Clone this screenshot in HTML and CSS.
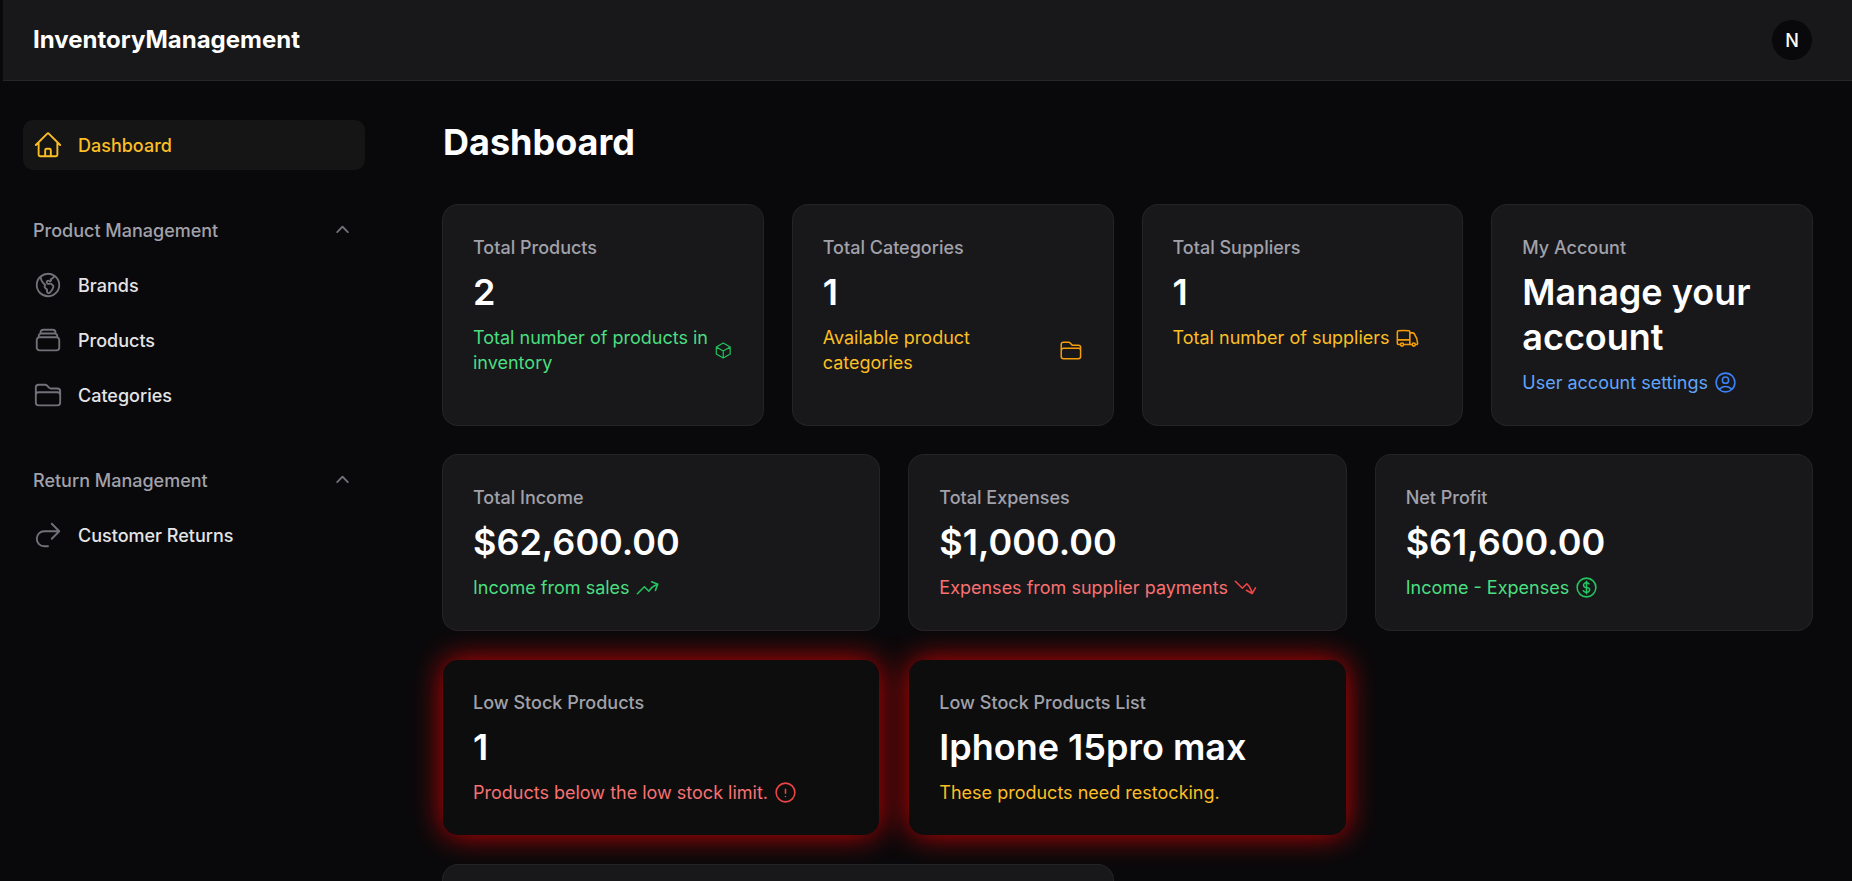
FILE: index.html
```html
<!DOCTYPE html>
<html lang="en">
<head>
<meta charset="utf-8">
<meta name="viewport" content="width=device-width, initial-scale=1">
<title>Dashboard - InventoryManagement</title>
<link rel="stylesheet" href="styles.css">
</head>
<body class="app">
<header class="topbar">
  <a class="brand" href="#">InventoryManagement</a>
  <button class="avatar" type="button" aria-label="User menu">N</button>
</header>
<div class="layout">
  <nav class="sidebar" aria-label="Main">
    <a class="nav-item nav-item-active" href="#" aria-current="page">
      <svg class="icon nav-icon" viewBox="0 0 24 24"><path d="m2.25 12 8.954-8.955c.44-.439 1.152-.439 1.591 0L21.75 12M4.5 9.75v10.125c0 .621.504 1.125 1.125 1.125H9.75v-4.875c0-.621.504-1.125 1.125-1.125h2.25c.621 0 1.125.504 1.125 1.125V21h4.125c.621 0 1.125-.504 1.125-1.125V9.75M8.25 21h8.25"/></svg>
      <span>Dashboard</span>
    </a>
    <section class="nav-group">
      <button class="nav-heading" type="button" aria-expanded="true">
        <span>Product Management</span>
        <svg class="chevron" viewBox="0 0 20 20"><path d="M9.47 6.47a.75.75 0 0 1 1.06 0l4.25 4.25a.75.75 0 1 1-1.06 1.06L10 8.06l-3.72 3.72a.75.75 0 0 1-1.06-1.06l4.25-4.25Z"/></svg>
      </button>
      <a class="nav-item" href="#">
        <svg class="icon nav-icon" viewBox="0 0 24 24"><path d="m6.115 5.19.319 1.913A6 6 0 0 0 8.11 10.36L9.75 12l-.387.775c-.217.433-.132.956.21 1.298l1.348 1.348c.21.21.329.497.329.795v1.089c0 .426.24.815.622 1.006l.153.076c.433.217.956.132 1.298-.21l.723-.723a8.7 8.7 0 0 0 2.288-4.042 1.087 1.087 0 0 0-.358-1.099l-1.33-1.108c-.251-.21-.582-.299-.905-.245l-1.17.195a1.125 1.125 0 0 1-.98-.314l-.295-.295a1.125 1.125 0 0 1 0-1.591l.13-.132a1.125 1.125 0 0 1 1.3-.21l.603.302a.809.809 0 0 0 1.086-1.086L14.25 7.5l1.256-.837a4.5 4.5 0 0 0 1.528-1.732l.146-.292M6.115 5.19A9 9 0 1 0 17.18 4.64M6.115 5.19A8.965 8.965 0 0 1 12 3c1.929 0 3.716.607 5.18 1.64"/></svg>
        <span>Brands</span>
      </a>
      <a class="nav-item" href="#">
        <svg class="icon nav-icon" viewBox="0 0 24 24"><path d="M6 6.878V6a2.25 2.25 0 0 1 2.25-2.25h7.5A2.25 2.25 0 0 1 18 6v.878m-12 0c.235-.083.487-.128.75-.128h10.5c.263 0 .515.045.75.128m-12 0A2.25 2.25 0 0 0 4.5 9v.878m13.5-3A2.25 2.25 0 0 1 19.5 9v.878m0 0a2.246 2.246 0 0 0-.75-.128H5.25c-.263 0-.515.045-.75.128m15 0A2.25 2.25 0 0 1 21 12v6a2.25 2.25 0 0 1-2.25 2.25H5.25A2.25 2.25 0 0 1 3 18v-6c0-.98.626-1.813 1.5-2.122"/></svg>
        <span>Products</span>
      </a>
      <a class="nav-item" href="#">
        <svg class="icon nav-icon" viewBox="0 0 24 24"><path d="M2.25 12.75V12A2.25 2.25 0 0 1 4.5 9.75h15A2.25 2.25 0 0 1 21.75 12v.75m-8.69-6.44-2.12-2.12a1.5 1.5 0 0 0-1.061-.44H4.5A2.25 2.25 0 0 0 2.25 6v12a2.25 2.25 0 0 0 2.25 2.25h15A2.25 2.25 0 0 0 21.75 18V9a2.25 2.25 0 0 0-2.25-2.25h-5.379a1.5 1.5 0 0 1-1.06-.44Z"/></svg>
        <span>Categories</span>
      </a>
    </section>
    <section class="nav-group">
      <button class="nav-heading" type="button" aria-expanded="true">
        <span>Return Management</span>
        <svg class="chevron" viewBox="0 0 20 20"><path d="M9.47 6.47a.75.75 0 0 1 1.06 0l4.25 4.25a.75.75 0 1 1-1.06 1.06L10 8.06l-3.72 3.72a.75.75 0 0 1-1.06-1.06l4.25-4.25Z"/></svg>
      </button>
      <a class="nav-item" href="#">
        <svg class="icon nav-icon" viewBox="0 0 24 24"><path d="m15 15 6-6m0 0-6-6m6 6H9a6 6 0 0 0 0 12h3"/></svg>
        <span>Customer Returns</span>
      </a>
    </section>
  </nav>
  <main class="content">
    <h1 class="page-title">Dashboard</h1>
    <div class="widgets">
      <section class="stats stats-four">
        <article class="card">
          <p class="card-label">Total Products</p>
          <p class="card-value">2</p>
          <p class="card-note note-green"><span>Total number of products in inventory</span>
            <svg class="icon note-icon" viewBox="0 0 24 24"><path d="m21 7.5-9-5.25L3 7.5m18 0-9 5.25m9-5.25v9l-9 5.25M3 7.5l9 5.25M3 7.5v9l9 5.25m0-9v9"/></svg></p>
        </article>
        <article class="card">
          <p class="card-label">Total Categories</p>
          <p class="card-value">1</p>
          <p class="card-note note-amber"><span>Available product categories</span>
            <svg class="icon note-icon" viewBox="0 0 24 24"><path d="M2.25 12.75V12A2.25 2.25 0 0 1 4.5 9.75h15A2.25 2.25 0 0 1 21.75 12v.75m-8.69-6.44-2.12-2.12a1.5 1.5 0 0 0-1.061-.44H4.5A2.25 2.25 0 0 0 2.25 6v12a2.25 2.25 0 0 0 2.25 2.25h15A2.25 2.25 0 0 0 21.75 18V9a2.25 2.25 0 0 0-2.25-2.25h-5.379a1.5 1.5 0 0 1-1.06-.44Z"/></svg></p>
        </article>
        <article class="card">
          <p class="card-label">Total Suppliers</p>
          <p class="card-value">1</p>
          <p class="card-note note-amber"><span>Total number of suppliers</span>
            <svg class="icon note-icon" viewBox="0 0 24 24"><path d="M8.25 18.75a1.5 1.5 0 0 1-3 0m3 0a1.5 1.5 0 0 0-3 0m3 0h6m-9 0H3.375a1.125 1.125 0 0 1-1.125-1.125V14.25m17.25 4.5a1.5 1.5 0 0 1-3 0m3 0a1.5 1.5 0 0 0-3 0m3 0h1.125c.621 0 1.129-.504 1.09-1.124a17.902 17.902 0 0 0-3.213-9.193 2.056 2.056 0 0 0-1.58-.86H14.25M16.5 18.75h-2.25m0-11.177v-.958c0-.568-.422-1.048-.987-1.106a48.554 48.554 0 0 0-10.026 0 1.106 1.106 0 0 0-.987 1.106v7.635m12-6.677v6.677m0 4.5v-4.5m0 0h-12"/></svg></p>
        </article>
        <article class="card">
          <p class="card-label">My Account</p>
          <p class="card-value">Manage your account</p>
          <p class="card-note note-blue"><span>User account settings</span>
            <svg class="icon note-icon" viewBox="0 0 24 24"><path d="M17.982 18.725A7.488 7.488 0 0 0 12 15.75a7.488 7.488 0 0 0-5.982 2.975m11.963 0a9 9 0 1 0-11.963 0m11.963 0A8.966 8.966 0 0 1 12 21a8.966 8.966 0 0 1-5.982-2.275M15 9.75a3 3 0 1 1-6 0 3 3 0 0 1 6 0Z"/></svg></p>
        </article>
      </section>
      <section class="stats stats-three">
        <article class="card">
          <p class="card-label">Total Income</p>
          <p class="card-value">$62,600.00</p>
          <p class="card-note note-green"><span>Income from sales</span>
            <svg class="icon note-icon" viewBox="0 0 24 24"><path d="M2.25 18 9 11.25l4.306 4.306a11.95 11.95 0 0 1 5.814-5.518l2.74-1.22m0 0-5.94-2.281m5.94 2.28-2.28 5.941"/></svg></p>
        </article>
        <article class="card">
          <p class="card-label">Total Expenses</p>
          <p class="card-value">$1,000.00</p>
          <p class="card-note note-red"><span>Expenses from supplier payments</span>
            <svg class="icon note-icon" viewBox="0 0 24 24"><path d="M2.25 6 9 12.75l4.286-4.286a11.948 11.948 0 0 1 4.306 6.43l.776 2.898m0 0 3.182-5.511m-3.182 5.51-5.511-3.181"/></svg></p>
        </article>
        <article class="card">
          <p class="card-label">Net Profit</p>
          <p class="card-value">$61,600.00</p>
          <p class="card-note note-green"><span>Income - Expenses</span>
            <svg class="icon note-icon" viewBox="0 0 24 24"><path d="M12 6v12m-3-2.818.879.659c1.171.879 3.07.879 4.242 0 1.172-.879 1.172-2.303 0-3.182C13.536 12.219 12.768 12 12 12c-.725 0-1.45-.22-2.003-.659-1.106-.879-1.106-2.303 0-3.182s2.9-.879 4.006 0l.415.33M21 12a9 9 0 1 1-18 0 9 9 0 0 1 18 0Z"/></svg></p>
        </article>
      </section>
      <section class="stats stats-three">
        <article class="card card-alert">
          <p class="card-label">Low Stock Products</p>
          <p class="card-value">1</p>
          <p class="card-note note-red"><span>Products below the low stock limit.</span>
            <svg class="icon note-icon" viewBox="0 0 24 24"><path d="M12 9v3.75m9-.75a9 9 0 1 1-18 0 9 9 0 0 1 18 0Zm-9 3.75h.008v.008H12v-.008Z"/></svg></p>
        </article>
        <article class="card card-alert">
          <p class="card-label">Low Stock Products List</p>
          <p class="card-value">Iphone 15pro max</p>
          <p class="card-note note-amber"><span>These products need restocking.</span></p>
        </article>
      </section>
      <section class="stats stats-two">
        <article class="card card-chart"></article>
      </section>
    </div>
  </main>
</div>
</body>
</html>
```
FILE: styles.css
```css
* {
  box-sizing: border-box;
}

.app {
  margin: 0;
  height: 100vh;
  padding-left: 3px;
  display: flex;
  flex-direction: column;
  overflow: hidden;
  background: #09090b;
  color: #fff;
  font-family: Inter, "Liberation Sans", sans-serif;
  font-size: 18px;
  line-height: 25px;
}

a {
  color: inherit;
  text-decoration: none;
}

button {
  border: 0;
  background: none;
  font: inherit;
  cursor: pointer;
}

p,
h1 {
  margin: 0;
}

.icon {
  fill: none;
  stroke: currentColor;
  stroke-width: 1.5;
  stroke-linecap: round;
  stroke-linejoin: round;
}

.topbar {
  flex: none;
  height: 80px;
  padding: 0 40px 0 30px;
  display: flex;
  align-items: center;
  justify-content: space-between;
  background: #18181b;
  box-shadow: 0 1px 0 #27272a;
}

.brand {
  font-size: 24px;
  font-weight: 700;
  line-height: 30px;
}

.avatar {
  width: 40px;
  height: 40px;
  padding: 0;
  border-radius: 50%;
  background: #09090b;
  color: #fff;
  font-weight: 500;
}

.layout {
  flex: 1;
  min-height: 0;
  display: flex;
}

.sidebar {
  flex: none;
  width: 400px;
  padding: 40px 38px 40px 20px;
  display: flex;
  flex-direction: column;
  gap: 35px;
  font-weight: 500;
}

.nav-group {
  display: flex;
  flex-direction: column;
  gap: 5px;
}

.nav-item {
  height: 50px;
  padding: 10px;
  display: flex;
  align-items: center;
  gap: 15px;
  border-radius: 10px;
  color: #e4e4e7;
}

.nav-icon {
  width: 30px;
  height: 30px;
  color: #71717a;
}

.nav-item-active {
  background: #151516;
  color: #fbbf24;
}

.nav-item-active .nav-icon {
  color: inherit;
}

.nav-heading {
  height: 50px;
  padding: 10px;
  display: flex;
  align-items: center;
  justify-content: space-between;
  color: #a1a1aa;
}

.chevron {
  width: 25px;
  height: 25px;
  fill: #71717a;
}

.content {
  flex: 1;
  min-width: 0;
  padding: 40px;
  overflow-y: auto;
  scrollbar-width: none;
}

.page-title {
  margin-bottom: 40px;
  font-size: 36px;
  font-weight: 700;
  line-height: 45px;
}

.widgets {
  display: flex;
  flex-direction: column;
  gap: 30px;
}

.stats {
  display: grid;
  gap: 30px;
}

.stats-two {
  grid-template-columns: repeat(2, minmax(0, 1fr));
}

.stats-three {
  grid-template-columns: repeat(3, minmax(0, 1fr));
}

.stats-four {
  grid-template-columns: repeat(4, minmax(0, 1fr));
}

.card {
  padding: 30px;
  display: flex;
  flex-direction: column;
  gap: 10px;
  border-radius: 15px;
  background: #18181b;
  box-shadow: 0 0 0 1px #242427;
}

.card-alert {
  background: #0d0d0d;
  box-shadow: 0 0 30px rgba(255, 0, 0, 0.8);
}

.card-chart {
  min-height: 400px;
}

.card-label {
  color: #a1a1aa;
  font-weight: 500;
}

.card-value {
  font-size: 36px;
  font-weight: 600;
  line-height: 45px;
}

.card-note {
  display: flex;
  align-items: center;
  gap: 5px;
}

.note-icon {
  width: 25px;
  height: 25px;
}

.note-green {
  color: #4ade80;
}

.note-green .note-icon {
  color: #22c55e;
}

.note-amber {
  color: #fbbf24;
}

.note-amber .note-icon {
  color: #f59e0b;
}

.note-blue {
  color: #60a5fa;
}

.note-blue .note-icon {
  color: #3b82f6;
}

.note-red {
  color: #f87171;
}

.note-red .note-icon {
  color: #ef4444;
}
```
